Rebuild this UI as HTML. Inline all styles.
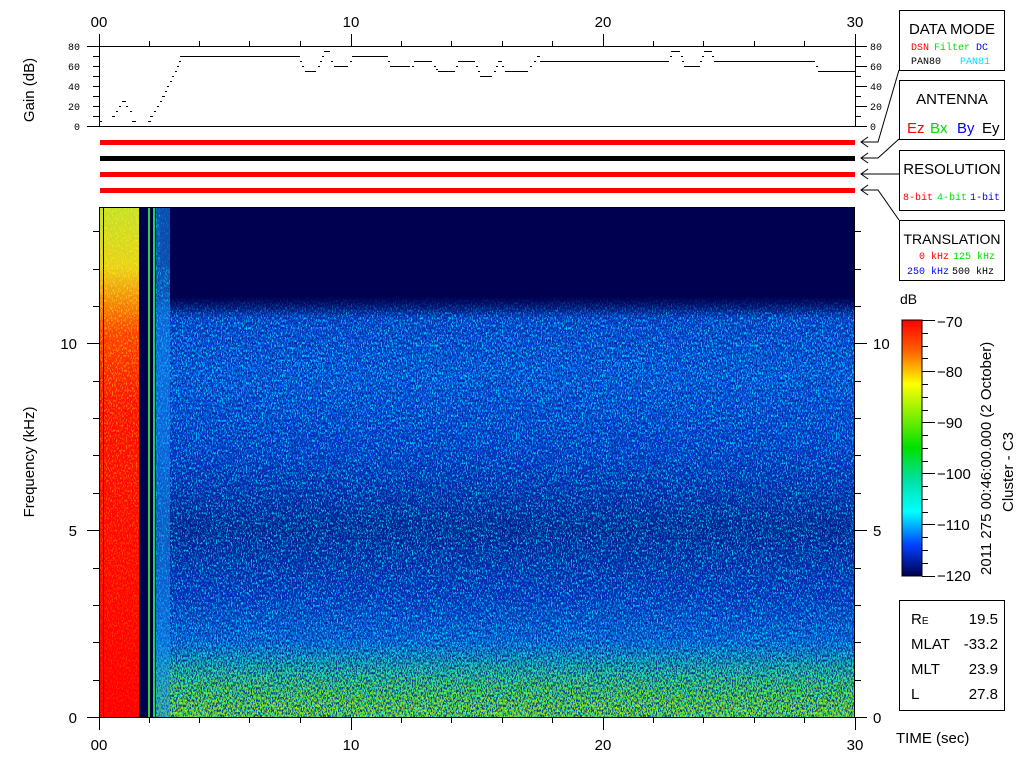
<!DOCTYPE html>
<html><head><meta charset="utf-8"><style>
html,body{margin:0;padding:0;background:#fff;width:1024px;height:768px;overflow:hidden}
svg{display:block}
text{font-family:"Liberation Sans",sans-serif}
.m{font-family:"Liberation Mono",monospace}
</style></head><body>
<svg width="1024" height="768" xmlns="http://www.w3.org/2000/svg">
<defs>
<linearGradient id="spec" x1="0" y1="0" x2="0" y2="1">
<stop offset="0" stop-color="#000050"/>
<stop offset="0.17" stop-color="#000060"/>
<stop offset="0.21" stop-color="#0a40e0"/>
<stop offset="0.33" stop-color="#0858f8"/>
<stop offset="0.48" stop-color="#0838e0"/>
<stop offset="0.63" stop-color="#041890"/>
<stop offset="0.76" stop-color="#0830d0"/>
<stop offset="0.86" stop-color="#0870f0"/>
<stop offset="0.92" stop-color="#10c0d0"/>
<stop offset="0.96" stop-color="#30e040"/>
<stop offset="1" stop-color="#d0e020"/>
</linearGradient>
<linearGradient id="topfade" x1="0" y1="0" x2="0" y2="1">
<stop offset="0" stop-color="#000050" stop-opacity="1"/>
<stop offset="0.8" stop-color="#000050" stop-opacity="1"/>
<stop offset="1" stop-color="#000050" stop-opacity="0"/>
</linearGradient>
<linearGradient id="cb" x1="0" y1="0" x2="0" y2="1">
<stop offset="0" stop-color="#ff0000"/>
<stop offset="0.12" stop-color="#ff6000"/>
<stop offset="0.25" stop-color="#ffff00"/>
<stop offset="0.5" stop-color="#00e000"/>
<stop offset="0.62" stop-color="#00e0a0"/>
<stop offset="0.75" stop-color="#00ffff"/>
<stop offset="0.88" stop-color="#0040ff"/>
<stop offset="1" stop-color="#000050"/>
</linearGradient>
<linearGradient id="leftred" x1="0" y1="0" x2="0" y2="1">
<stop offset="0" stop-color="#c0e030"/>
<stop offset="0.12" stop-color="#e8d020"/>
<stop offset="0.25" stop-color="#ff4000"/>
<stop offset="0.4" stop-color="#ff1000"/>
<stop offset="1" stop-color="#ff0000"/>
</linearGradient>
<filter id="nz" x="0" y="0" width="100%" height="100%">
<feTurbulence type="fractalNoise" baseFrequency="0.8 0.4" numOctaves="2" seed="3"/>
<feColorMatrix type="matrix" values="0 0 0 0 0  0 0 0 0 0.02  0 0 0 0 0.3  0 0 0 -10 5.3"/>
</filter>
<filter id="nz2" x="0" y="0" width="100%" height="100%">
<feTurbulence type="fractalNoise" baseFrequency="0.8 0.4" numOctaves="2" seed="9"/>
<feColorMatrix type="matrix" values="0 0 0 0 0  0 0 0 0 0.9  0 0 0 0 1  0 0 0 10 -5"/>
</filter>
<filter id="nz3" x="0" y="0" width="100%" height="100%">
<feTurbulence type="fractalNoise" baseFrequency="0.8 0.4" numOctaves="2" seed="5"/>
<feColorMatrix type="matrix" values="0 0 0 0 1  0 0 0 0 0.95  0 0 0 0 0  0 0 0 10 -5.5"/>
</filter>
<linearGradient id="botmask" x1="0" y1="0" x2="0" y2="1">
<stop offset="0" stop-color="#fff" stop-opacity="0"/>
<stop offset="1" stop-color="#fff" stop-opacity="1"/>
</linearGradient>
<linearGradient id="leftmaskg" x1="0" y1="0" x2="0" y2="1">
<stop offset="0" stop-color="#fff" stop-opacity="1"/>
<stop offset="1" stop-color="#fff" stop-opacity="0.2"/>
</linearGradient>
<mask id="bm"><rect x="99" y="640" width="756" height="77" fill="url(#botmask)"/></mask>
<mask id="bm2"><rect x="99" y="660" width="756" height="57" fill="url(#botmask)"/></mask>
<mask id="lm"><rect x="100" y="207" width="39" height="510" fill="url(#leftmaskg)"/></mask>
</defs>

<g font-size="15" text-anchor="middle">
<text x="99" y="27">00</text><text x="351" y="27">10</text><text x="603" y="27">20</text><text x="855" y="27">30</text>
</g>
<g stroke="#000" stroke-width="1" fill="none">
<line x1="87" y1="46.5" x2="855" y2="46.5"/>
<line x1="87" y1="126.5" x2="855" y2="126.5"/>
<line x1="99.5" y1="34" x2="99.5" y2="126"/>
<line x1="855.5" y1="34" x2="855.5" y2="126"/>
<path d="M149.5 46V41M199.5 46V41M249.5 46V41M300.5 46V41M401.5 46V41M451.5 46V41M502.5 46V41M552.5 46V41M653.5 46V41M703.5 46V41M754.5 46V41M804.5 46V41M351.5 46V34M603.5 46V34"/>
<path d="M93 56.5H99M93 66.5H99M93 76.5H99M93 86.5H99M93 96.5H99M93 106.5H99M93 116.5H99"/>
<path d="M855 46.5H867M855 56.5H861M855 66.5H867M855 76.5H861M855 86.5H867M855 96.5H861M855 106.5H867M855 116.5H861M855 126.5H867"/>
<path d="M180 56.5H300M305 71.5H316M324 51.5H330M334 66.5H348M352 56.5H388M390 66.5H410M414 61.5H432M438 71.5H455M458 61.5H475M480 76.5H492M505 71.5H528M540 61.5H669M671 51.5H680M684 66.5H700M704 51.5H712M714 61.5H815M818 71.5H855"/>
</g>
<g fill="#000">
<rect x="100" y="121" width="2" height="1"/><rect x="112" y="116" width="3" height="1"/><rect x="116" y="111" width="2" height="1"/><rect x="119" y="106" width="2" height="1"/><rect x="122" y="101" width="4" height="1"/><rect x="126" y="106" width="2" height="1"/><rect x="130" y="111" width="2" height="1"/><rect x="132" y="121" width="4" height="1"/>
<rect x="148" y="121" width="3" height="1"/><rect x="150" y="116" width="3" height="1"/><rect x="154" y="111" width="2" height="1"/><rect x="157" y="106" width="2" height="1"/><rect x="160" y="101" width="2" height="1"/><rect x="162" y="96" width="3" height="1"/><rect x="165" y="91" width="2" height="1"/><rect x="167" y="86" width="2" height="1"/><rect x="170" y="81" width="2" height="1"/><rect x="172" y="76" width="2" height="1"/><rect x="175" y="71" width="2" height="1"/><rect x="177" y="66" width="2" height="1"/><rect x="179" y="61" width="2" height="1"/>
<rect x="300" y="61" width="2" height="1"/><rect x="302" y="66" width="2" height="1"/><rect x="318" y="66" width="2" height="1"/><rect x="320" y="61" width="2" height="1"/><rect x="322" y="56" width="2" height="1"/><rect x="331" y="61" width="2" height="1"/>
<rect x="350" y="61" width="2" height="1"/><rect x="388" y="61" width="2" height="1"/><rect x="412" y="66" width="2" height="1"/><rect x="434" y="66" width="2" height="1"/><rect x="436" y="69" width="2" height="1"/><rect x="456" y="66" width="2" height="1"/><rect x="476" y="66" width="2" height="1"/><rect x="478" y="71" width="2" height="1"/><rect x="494" y="71" width="2" height="1"/><rect x="496" y="66" width="2" height="1"/><rect x="498" y="61" width="4" height="1"/><rect x="502" y="66" width="2" height="1"/><rect x="530" y="66" width="2" height="1"/><rect x="534" y="61" width="2" height="1"/><rect x="537" y="56" width="3" height="1"/>
<rect x="670" y="56" width="2" height="1"/><rect x="681" y="56" width="2" height="1"/><rect x="682" y="61" width="2" height="1"/><rect x="700" y="61" width="2" height="1"/><rect x="702" y="56" width="2" height="1"/><rect x="712" y="56" width="2" height="1"/><rect x="816" y="66" width="2" height="1"/>
</g>
<g font-size="10" class="m" text-anchor="end">
<text x="80" y="50" class="m">80</text><text x="80" y="70" class="m">60</text><text x="80" y="90" class="m">40</text><text x="80" y="110" class="m">20</text><text x="80" y="130" class="m">0</text>
</g>
<g font-size="10" class="m">
<text x="870" y="50" class="m">80</text><text x="870" y="70" class="m">60</text><text x="870" y="90" class="m">40</text><text x="870" y="110" class="m">20</text><text x="870" y="130" class="m">0</text>
</g>
<text transform="translate(34,90) rotate(-90)" font-size="15" text-anchor="middle">Gain (dB)</text>

<rect x="100" y="140" width="755" height="5" fill="#ff0000"/>
<rect x="100" y="156" width="755" height="5" fill="#000"/>
<rect x="100" y="172" width="755" height="5" fill="#ff0000"/>
<rect x="100" y="188" width="755" height="5" fill="#ff0000"/>

<g stroke="#000" fill="none" stroke-width="1">
<path d="M868 137L861 142L868 147M861 142H878L899 70"/>
<path d="M868 153L861 158L868 163M861 158H878L899 139"/>
<path d="M868 169L861 174L868 179M861 174H899"/>
<path d="M868 185L861 190L868 195M861 190H878L899 220"/>
</g>

<rect x="99" y="207" width="756" height="510" fill="url(#spec)"/>
<rect x="99" y="640" width="756" height="77" fill="#60e020" mask="url(#bm)"/>
<rect x="99" y="207" width="756" height="510" filter="url(#nz2)" opacity="0.75"/>
<rect x="99" y="207" width="756" height="510" filter="url(#nz)" opacity="0.85"/>
<g mask="url(#bm2)"><rect x="99" y="660" width="756" height="57" filter="url(#nz3)" opacity="0.7"/></g>
<rect x="170" y="207" width="685" height="112" fill="url(#topfade)"/>
<rect x="160" y="207" width="10" height="60" fill="#000060" opacity="0.6"/>
<rect x="155" y="207" width="15" height="510" fill="#1890f0" opacity="0.5"/>
<rect x="100" y="207" width="39" height="510" fill="url(#leftred)"/>
<g mask="url(#lm)"><rect x="100" y="207" width="39" height="510" filter="url(#nz3)" opacity="0.6"/></g>
<rect x="103" y="207" width="1" height="510" fill="#000"/>
<rect x="139" y="207" width="9" height="510" fill="#000050"/>
<rect x="148" y="207" width="2" height="510" fill="#30d040"/>
<rect x="150" y="207" width="3" height="510" fill="#000040"/>
<rect x="153" y="207" width="2" height="510" fill="#20d060"/>
<rect x="155" y="207" width="1" height="510" fill="#000"/>
<rect x="99.5" y="207.5" width="755" height="510" fill="none" stroke="#000"/>

<g stroke="#000" fill="none">
<path d="M87 717.5H99M87 530.5H99M87 343.5H99M93 680.5H99M93 642.5H99M93 605.5H99M93 568.5H99M93 493.5H99M93 455.5H99M93 418.5H99M93 381.5H99M93 306.5H99M93 269.5H99M93 231.5H99"/>
<path d="M855 717.5H867M855 530.5H867M855 343.5H867M855 680.5H861M855 642.5H861M855 605.5H861M855 568.5H861M855 493.5H861M855 455.5H861M855 418.5H861M855 381.5H861M855 306.5H861M855 269.5H861M855 231.5H861"/>
<path d="M99.5 717V730M351.5 717V730M603.5 717V730M855.5 717V730M149.5 717V723M199.5 717V723M249.5 717V723M300.5 717V723M401.5 717V723M451.5 717V723M502.5 717V723M552.5 717V723M653.5 717V723M703.5 717V723M754.5 717V723M804.5 717V723"/>
</g>
<g font-size="15" text-anchor="end">
<text x="77" y="723">0</text><text x="77" y="536">5</text><text x="77" y="349">10</text>
</g>
<g font-size="15">
<text x="873" y="723">0</text><text x="873" y="536">5</text><text x="873" y="349">10</text>
</g>
<text transform="translate(34,462) rotate(-90)" font-size="15" text-anchor="middle">Frequency (kHz)</text>
<g font-size="15" text-anchor="middle">
<text x="99" y="750">00</text><text x="351" y="750">10</text><text x="603" y="750">20</text><text x="855" y="750">30</text>
</g>
<text x="896" y="743" font-size="15">TIME (sec)</text>

<g fill="#fff" stroke="#000">
<rect x="899.5" y="10.5" width="105" height="60"/>
<rect x="899.5" y="80.5" width="105" height="59"/>
<rect x="899.5" y="150.5" width="105" height="60"/>
<rect x="899.5" y="220.5" width="105" height="60"/>
<rect x="899.5" y="600.5" width="105" height="110"/>
</g>
<text x="952" y="34" font-size="15" text-anchor="middle">DATA MODE</text>
<g font-size="10" class="m">
<text x="911" y="50" fill="#ff0000" class="m">DSN</text><text x="934" y="50" fill="#00e000" class="m">Filter</text><text x="976" y="50" fill="#0000ff" class="m">DC</text>
<text x="911" y="64" class="m">PAN80</text><text x="960" y="64" fill="#00e0ff" class="m">PAN81</text>
</g>
<text x="952" y="104" font-size="15" text-anchor="middle">ANTENNA</text>
<g font-size="15">
<text x="907" y="133" fill="#ff0000">Ez</text><text x="930" y="133" fill="#00e000">Bx</text><text x="957" y="133" fill="#0000ff">By</text><text x="982" y="133">Ey</text>
</g>
<text x="952" y="174" font-size="15" text-anchor="middle">RESOLUTION</text>
<g font-size="10" class="m">
<text x="903" y="200" fill="#ff0000" class="m">8-bit</text><text x="937" y="200" fill="#00e000" class="m">4-bit</text><text x="970" y="200" fill="#0000ff" class="m">1-bit</text>
</g>
<text x="952" y="244" font-size="14" text-anchor="middle">TRANSLATION</text>
<g font-size="10" class="m">
<text x="919" y="259" fill="#ff0000" class="m">0 kHz</text><text x="953" y="259" fill="#00e000" class="m">125 kHz</text>
<text x="907" y="274" fill="#0000ff" class="m">250 kHz</text><text x="952" y="274" class="m">500 kHz</text>
</g>

<text x="900" y="304" font-size="14">dB</text>
<rect x="902" y="320" width="20" height="256" fill="url(#cb)" stroke="#000"/>
<g stroke="#000">
<path d="M922 320.5H935M922 371.5H935M922 422.5H935M922 473.5H935M922 524.5H935M922 576.5H935M922 333.5H928M922 346.5H928M922 358.5H928M922 384.5H928M922 397.5H928M922 410.5H928M922 435.5H928M922 448.5H928M922 461.5H928M922 486.5H928M922 499.5H928M922 512.5H928M922 537.5H928M922 550.5H928M922 563.5H928"/>
</g>
<g font-size="15">
<text x="937" y="327">−70</text><text x="937" y="377">−80</text><text x="937" y="428">−90</text><text x="937" y="479">−100</text><text x="937" y="530">−110</text><text x="937" y="581">−120</text>
</g>
<text transform="translate(991,575) rotate(-90)" font-size="15">2011 275 00:46:00.000 (2 October)</text>
<text transform="translate(1013,512) rotate(-90)" font-size="15">Cluster - C3</text>

<g font-size="15">
<text x="911" y="624">R<tspan font-size="10">E</tspan></text><text x="998" y="624" text-anchor="end">19.5</text>
<text x="911" y="649">MLAT</text><text x="998" y="649" text-anchor="end">-33.2</text>
<text x="911" y="674">MLT</text><text x="998" y="674" text-anchor="end">23.9</text>
<text x="911" y="699">L</text><text x="998" y="699" text-anchor="end">27.8</text>
</g>
</svg>
</body></html>
